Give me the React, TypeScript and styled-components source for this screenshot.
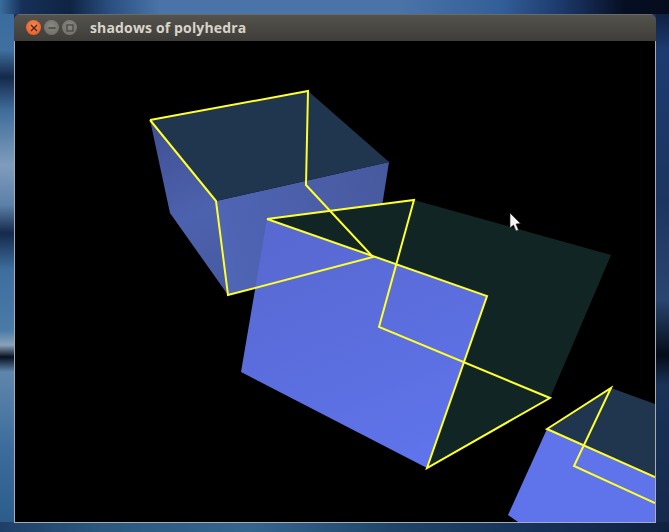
import React from 'react';
import styled, { createGlobalStyle } from 'styled-components';

const GlobalStyle = createGlobalStyle`
  html, body {
    margin: 0;
    padding: 0;
    background: #16305c;
  }
`;

const yellow = '#ffff2e';

const cubeEdges = [
  '150,120 308,91 306,185 373,257 228,295 216,201 150,120',
  '267,219 414,200 379,327 550,398 427,468 487,296 267,219',
  '655,477 547,429 611,388 574,466 655,503',
];

export default function App() {
  return (
    <Desktop>
      <GlobalStyle />
      <Window>
        <TitleBar>
          <WindowButtons>
            <CloseButton>
              <svg width="8" height="8" viewBox="0 0 8 8">
                <path d="M1 1 L7 7 M7 1 L1 7" stroke="#4a2012" strokeWidth="1.3" />
              </svg>
            </CloseButton>
            <GreyButton>
              <svg width="8" height="8" viewBox="0 0 8 8">
                <path d="M0.5 4 H7.5" stroke="#45443f" strokeWidth="1.4" />
              </svg>
            </GreyButton>
            <GreyButton>
              <svg width="8" height="8" viewBox="0 0 8 8">
                <rect x="1" y="1" width="6" height="6" fill="none" stroke="#45443f" strokeWidth="1.2" />
              </svg>
            </GreyButton>
          </WindowButtons>
          <Title>shadows of polyhedra</Title>
        </TitleBar>
        <Canvas viewBox="15 41 640 481">
          <defs>
            <linearGradient id="leftFace" gradientUnits="userSpaceOnUse" x1="150" y1="120" x2="228" y2="295">
              <stop offset="0" stopColor="#3f4f92" />
              <stop offset="0.55" stopColor="#4d62ae" />
              <stop offset="1" stopColor="#46599f" />
            </linearGradient>
            <linearGradient id="frontFace" gradientUnits="userSpaceOnUse" x1="220" y1="220" x2="390" y2="180">
              <stop offset="0" stopColor="#4f65b5" />
              <stop offset="1" stopColor="#47599e" />
            </linearGradient>
            <linearGradient id="bigFace" gradientUnits="userSpaceOnUse" x1="300" y1="230" x2="400" y2="460">
              <stop offset="0" stopColor="#5869d2" />
              <stop offset="1" stopColor="#5f73ea" />
            </linearGradient>
          </defs>

          <polygon points="150,120 216,201 228,295 170,213" fill="url(#leftFace)" />
          <polygon points="216,201 389,162 374,257 228,295" fill="url(#frontFace)" />
          <polygon points="150,120 308,91 389,162 216,201" fill="#20364f" />

          <polygon points="267,219 414,200 611,255 550,398 427,468 487,296" fill="#112525" />
          <polygon points="267,219 487,296 427,468 241,372" fill="url(#bigFace)" />

          <polygon points="611,388 655,404 655,477 547,429" fill="#20364f" />
          <polygon points="547,429 655,477 655,522 518,522 508,515" fill="#5f73ea" />

          {cubeEdges.map((points) => (
            <polyline
              key={points}
              points={points}
              fill="none"
              stroke={yellow}
              strokeWidth="2"
              strokeLinejoin="miter"
            />
          ))}

          <path
            d="M510 213 V228 L513.5 225 L516 231 L518.5 230 L516 224 L520.5 223.5 Z"
            fill="#f4f4f4"
            stroke="#222"
            strokeWidth="0.6"
          />
        </Canvas>
      </Window>
    </Desktop>
  );
}

const Desktop = styled.div`
  box-sizing: border-box;
  width: 669px;
  height: 532px;
  overflow: hidden;
  padding: 14px 13px 9px 14px;
  background:
    linear-gradient(
        90deg,
        #3a6ca0 0,
        #163058 22px,
        #0f2444 70px,
        #2a4f80 110px,
        #4a74a8 160px,
        #4a74a8 400px,
        #335f98 500px,
        #1c3a6c 560px,
        #060e22 625px,
        #050c1e 669px
      )
      top / 100% 14px no-repeat,
    linear-gradient(
        90deg,
        #1f3f68 0,
        #2a587f 100px,
        #33658f 250px,
        #1e4468 400px,
        #152f55 560px,
        #0f2240 669px
      )
      bottom / 100% 10px no-repeat,
    linear-gradient(
        #3a6a9e 0,
        #3f709f 50px,
        #14294a 77px,
        #3f6c9a 110px,
        #7f9cbc 165px,
        #5c80a8 205px,
        #14294c 233px,
        #3e6e9e 270px,
        #4a7aa6 330px,
        #8aa2ba 345px,
        #07101e 357px,
        #5f86ac 372px,
        #3c6c9c 450px,
        #2a5a88 532px
      )
      left / 14px 100% no-repeat,
    linear-gradient(
        #0a1530 0,
        #1c3b70 50px,
        #1c3560 200px,
        #2a4570 300px,
        #050b18 355px,
        #1a3258 385px,
        #15294c 532px
      )
      right / 13px 100% no-repeat;
`;

const Window = styled.div`
  display: flex;
  flex-direction: column;
  width: 642px;
  height: 509px;
  border-radius: 6px 6px 0 0;
  overflow: hidden;
`;

const TitleBar = styled.div`
  display: flex;
  align-items: center;
  flex: 0 0 27px;
  padding-left: 12px;
  background: linear-gradient(#55534d, #3e3d39);
  box-shadow: inset 0 1px 0 #6b6960;
`;

const WindowButtons = styled.div`
  display: flex;
  gap: 3px;
`;

const WindowButton = styled.div`
  display: flex;
  align-items: center;
  justify-content: center;
  width: 15px;
  height: 15px;
  border-radius: 50%;
`;

const CloseButton = styled(WindowButton)`
  background: radial-gradient(circle at 50% 40%, #f58a52, #e5531f);
`;

const GreyButton = styled(WindowButton)`
  background: radial-gradient(circle at 50% 40%, #8a8880, #6b6a63);
`;

const Title = styled.div`
  margin-left: 13px;
  font-family: 'Open Sans', 'Noto Sans', sans-serif;
  font-size: 14px;
  font-weight: 700;
  letter-spacing: 0.15px;
  color: #d8d4c9;
  white-space: nowrap;
`;

const Canvas = styled.svg`
  display: block;
  box-sizing: content-box;
  width: 640px;
  height: 481px;
  border: 1px solid #a9aeb5;
  border-top: none;
  background: #000;
`;
